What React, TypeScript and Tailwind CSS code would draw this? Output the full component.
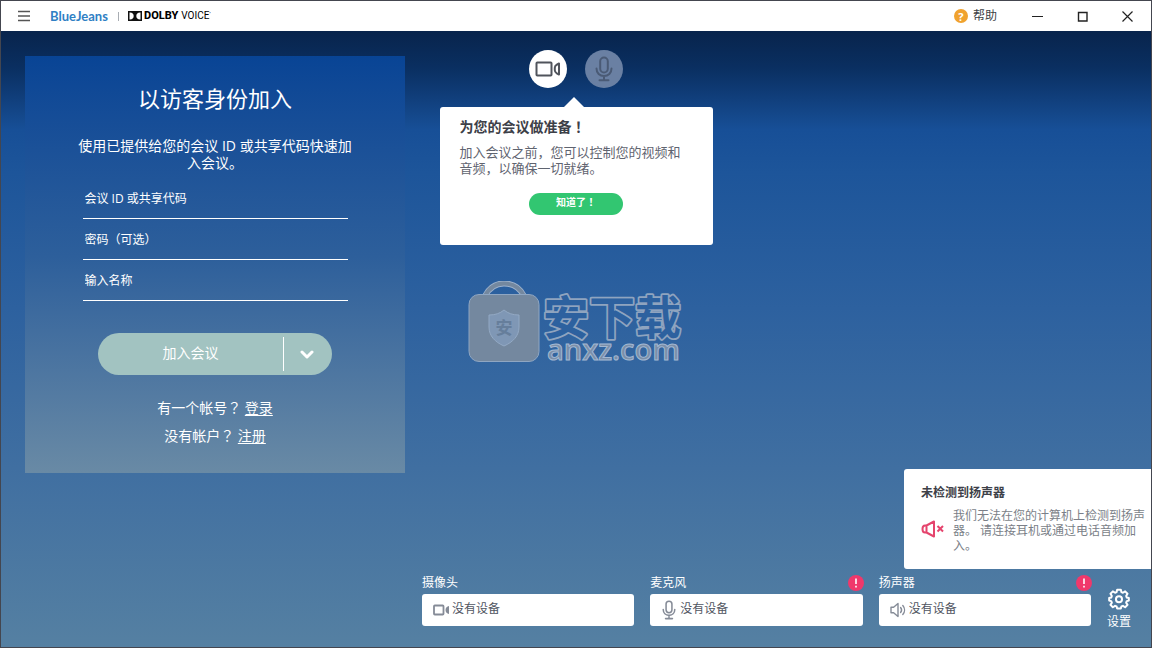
import type { ReactNode } from "react";

type IconProps = { className?: string };

function CameraIcon({ className }: IconProps) {
  return (
    <svg viewBox="0 0 26 16" className={className} fill="none" stroke="currentColor" strokeWidth="2" strokeLinejoin="round" aria-hidden="true">
      <rect x="1.5" y="1.5" width="15" height="13" rx="0.8" />
      <path d="M24 2.5v11l-2.2-1.2c-1.3-.8-2-1.800-2-3V6.700c0-1.200.7-2.200 2-3z" />
    </svg>
  );
}

function SmallCameraIcon({ className }: IconProps) {
  return (
    <svg viewBox="0 0 17 12" className={className} fill="none" stroke="currentColor" strokeWidth="1.800" strokeLinejoin="round" aria-hidden="true">
      <rect x="1" y="1.500" width="9.500" height="9" rx="0.800" />
      <path d="M16 2v8c-2-.5-3.500-1.800-3.500-4S14 2.500 16 2z" fill="currentColor" stroke="none" />
    </svg>
  );
}

function MicIcon({ className }: IconProps) {
  return (
    <svg viewBox="0 0 18 26" className={className} fill="none" stroke="currentColor" strokeWidth="2" strokeLinecap="round" aria-hidden="true">
      <rect x="5.200" y="1.500" width="7.600" height="15" rx="3.800" />
      <path d="M1.500 12.500c0 4.500 3.200 7.500 7.500 7.500s7.500-3 7.500-7.500M9 20v4M4.500 24.200h9" />
    </svg>
  );
}

function SpeakerIcon({ className }: IconProps) {
  return (
    <svg viewBox="0 0 16 16" className={className} fill="none" stroke="currentColor" strokeWidth="1.400" strokeLinejoin="round" strokeLinecap="round" aria-hidden="true">
      <path d="M1 5.200h2.600L8 1.500v13l-4.400-3.700H1z" />
      <path d="M10.600 5.500c1.200 1.500 1.200 3.500 0 5M12.800 3.500c2.300 2.600 2.300 6.400 0 9" />
    </svg>
  );
}

function MutedIcon({ className }: IconProps) {
  return (
    <svg viewBox="0 0 24 18" className={className} fill="none" stroke="currentColor" strokeWidth="2" strokeLinejoin="round" aria-hidden="true">
      <path d="M5.500 5.500H4C2.200 5.500 1.500 7 1.500 9s.7 3.500 2.500 3.500h1.500zM5.500 5.500 13 1.500v15l-7.500-4" />
      <path d="m16.500 6 5.500 5.500M22 6l-5.500 5.500" />
    </svg>
  );
}

function GearIcon({ className }: IconProps) {
  return (
    <svg viewBox="0 0 24 24" className={className} fill="none" stroke="currentColor" strokeWidth="2.200" strokeLinejoin="round" aria-hidden="true">
      <path d="M10 1.800h4l.6 2.700 1.700.7 2.400-1.500 2.600 2.600-1.500 2.400.7 1.700 2.200.6v2.600l-2.200.7-.7 1.700 1.500 2.400-2.600 2.600-2.400-1.500-1.700.7-.6 2.200h-4l-.6-2.200-1.700-.7L5.300 21l-2.600-2.600L4.200 16l-.7-1.700-2.200-.7V11l2.200-.6.7-1.700-1.500-2.400 2.600-2.600 2.400 1.500 1.700-.7z" />
      <circle cx="12" cy="12.200" r="3.300" />
    </svg>
  );
}

function Watermark() {
  return (
    <svg viewBox="0 0 216 96" className="pointer-events-none absolute top-[250px] left-1/2 h-[96px] w-[216px] -translate-x-[108px]" aria-hidden="true">
      <path d="M17 15C22 5 29 2.500 36 2.500S51 5 56 15" fill="none" stroke="#9cb1cc" strokeWidth="6" />
      <path d="M17 15C22 5 29 2.500 36 2.500S51 5 56 15" fill="none" stroke="#74889f" strokeWidth="4" />
      <rect x="1" y="13.500" width="70" height="67" rx="10" fill="#74889f" stroke="#8fa6c2" />
      <path d="M36 29c4 3.500 9 5 15 5v12c0 9-6 15-15 19-9-4-15-10-15-19V34c6 0 11-1.500 15-5z" fill="#7f97b5" stroke="#93a9c4" />
      <text x="36" y="53" textAnchor="middle" fontSize="17" fontWeight="700" fill="#667e9b" className="font-['Noto_Sans_CJK_SC',sans-serif]">安</text>
      <text
        x="75"
        y="53"
        fontSize="46"
        fontWeight="700"
        fill="#2d619f"
        stroke="#8fa4bf"
        strokeWidth="3.600"
        strokeLinejoin="round"
        paintOrder="stroke"
        className="font-['Noto_Sans_CJK_SC',sans-serif]"
      >
        安下载
      </text>
      <text x="79" y="79" fontSize="29" fontWeight="600" fill="#7b8fa9" stroke="#a3b8d2" strokeWidth="1" className="font-['Open_Sans',sans-serif]">anxz.com</text>
    </svg>
  );
}

function TitleBar() {
  return (
    <header className="flex h-[30px] items-center bg-white text-[#3c3f46]">
      <button type="button" aria-label="菜单" className="ml-[17px] flex h-6 w-3 items-center">
        <svg viewBox="0 0 12 12" className="size-3" stroke="#555" strokeWidth="1.300" aria-hidden="true">
          <path d="M0 1.500h12M0 6h12M0 10.500h12" />
        </svg>
      </button>
      <span className="ml-5 w-[57px] font-['Lato',sans-serif] text-[13px] leading-4 font-bold text-[#2f80c4]">BlueJeans</span>
      <span className="ml-[11px] h-[9px] w-px bg-[#a9adb3]" />
      <span className="ml-[9px] flex items-center text-black">
        <svg viewBox="0 0 14 10" className="mr-0.5 h-[10px] w-[14px]" aria-hidden="true">
          <rect width="14" height="10" fill="#111" />
          <path d="M1.500 1.500H2c2.300 0 3.700 1.500 3.700 3.500S4.300 8.500 2 8.500h-.5zM12.500 1.500H12C9.700 1.500 8.300 3 8.300 5s1.400 3.500 3.700 3.500h.5z" fill="#fff" />
        </svg>
        <span className="font-['Roboto',sans-serif] text-[11px] leading-4 font-extrabold">DOLBY</span>
        <span className="ml-[3px] font-['Roboto',sans-serif] text-[10px] leading-4">VOICE</span>
        <span className="mb-1 text-[6px] leading-none">’</span>
      </span>
      <button type="button" className="ml-auto flex items-center gap-[5px] text-[12px] leading-4">
        <span className="flex size-[14px] items-center justify-center rounded-full bg-[#f0a22e] font-['Open_Sans',sans-serif] text-[11px] leading-none font-bold text-white">?</span>
        帮助
      </button>
      <div className="mr-[18px] ml-[35px] flex items-center gap-[34px] text-[#222]">
        <button type="button" aria-label="最小化">
          <svg viewBox="0 0 11 11" className="size-[11px]" stroke="currentColor" aria-hidden="true"><path d="M0 5.500h11" /></svg>
        </button>
        <button type="button" aria-label="最大化">
          <svg viewBox="0 0 11 11" className="size-[11px]" fill="none" stroke="currentColor" strokeWidth="1.400" aria-hidden="true"><path d="M1.500 1.500h8.500v8.500h-8.500z" /></svg>
        </button>
        <button type="button" aria-label="关闭">
          <svg viewBox="0 0 11 11" className="size-[11px]" stroke="currentColor" strokeWidth="1.200" aria-hidden="true"><path d="m.5.5 10 10M10.500.5l-10 10" /></svg>
        </button>
      </div>
    </header>
  );
}

const fields = [
  { id: "meeting", label: "会议 ID 或共享代码", type: "text" },
  { id: "passcode", label: "密码（可选）", type: "password" },
  { id: "name", label: "输入名称", type: "text" },
];

function Mark({ children }: { children: ReactNode }) {
  return <span lang="zh-TW" className="font-['Noto_Sans_CJK_TC',sans-serif]">{children}</span>;
}

function JoinPanel() {
  return (
    <form className="flex w-[380px] flex-col items-center bg-linear-to-b from-[#084495] via-[#2d5f9b] via-48% to-[#698aa5] pt-[26px] pb-[29px] text-white">
      <h1 className="text-[22px] leading-8">以访客身份加入</h1>
      <p className="mt-[23px] w-[275px] text-center text-[14px] leading-[17px]">使用已提供给您的会议 ID 或共享代码快速加入会议。</p>
      <div className="mt-[7px] w-[265px]">
        {fields.map((f) => (
          <input
            key={f.id}
            id={f.id}
            type={f.type}
            aria-label={f.label}
            placeholder={f.label}
            className="block h-[41px] w-full border-b border-white bg-transparent px-0.5 text-[12px] leading-4 outline-none placeholder:text-white placeholder:opacity-100"
          />
        ))}
      </div>
      <div className="mt-8 flex h-[42px] w-[234px] items-center overflow-hidden rounded-full bg-[#a2c3c1]">
        <button type="button" className="h-full flex-1 pb-0.5 text-[14px] leading-5">加入会议</button>
        <span className="h-[34px] w-px bg-white" />
        <button type="button" aria-label="更多加入选项" className="flex h-full w-12 items-center justify-center pr-0.5">
          <svg viewBox="0 0 14 9" className="h-[9px] w-[14px]" fill="none" stroke="currentColor" strokeWidth="3" strokeLinecap="round" strokeLinejoin="round" aria-hidden="true">
            <path d="m2 2 5 5 5-5" />
          </svg>
        </button>
      </div>
      <p className="mt-[23px] h-[18px] text-[14px] leading-[18px]">有一个帐号<Mark>？</Mark> <a href="#login" className="underline underline-offset-2">登录</a></p>
      <p className="mt-[10px] h-[18px] text-[14px] leading-[18px]">没有帐户<Mark>？</Mark> <a href="#register" className="underline underline-offset-2">注册</a></p>
    </form>
  );
}

function PreparePopover() {
  return (
    <section className="flex flex-col items-center">
      <div className="flex gap-[18px]">
        <button type="button" aria-label="摄像头" className="flex size-[38px] items-center justify-center rounded-full bg-white text-[#50545c]">
          <CameraIcon className="h-4 w-[26px]" />
        </button>
        <button type="button" aria-label="麦克风" className="flex size-[38px] items-center justify-center rounded-full bg-[#6a80a3] text-[#4a5a75]">
          <MicIcon className="h-[26px] w-[18px]" />
        </button>
      </div>
      <svg viewBox="0 0 20 10" className="mt-[9px] mr-1 h-[10px] w-5" aria-hidden="true"><path d="M0 10 10 0l10 10z" fill="#fff" /></svg>
      <div className="flex w-full flex-col rounded-[3px] bg-white px-5 pt-[10px] pb-[30px]">
        <h2 className="h-[18px] text-[14px] leading-[18px] font-bold text-[#3d4048]">为您的会议做准备<Mark>！</Mark></h2>
        <p className="mt-[9px] text-[13px] leading-4 text-[#5f6470]">加入会议之前，您可以控制您的视频和音频，以确保一切就绪。</p>
        <button type="button" className="mt-[17px] flex h-[22px] w-[94px] items-center justify-center self-center rounded-full bg-[#32c671] pb-1 text-[10px] leading-4 font-bold text-white">知道了<Mark>！</Mark></button>
      </div>
    </section>
  );
}

const devices = [
  { id: "camera", label: "摄像头", alert: false, icon: <SmallCameraIcon className="h-3 w-[17px]" /> },
  { id: "mic", label: "麦克风", alert: true, icon: <MicIcon className="h-5 w-[14px]" /> },
  { id: "speaker", label: "扬声器", alert: true, icon: <SpeakerIcon className="size-4" /> },
];

function DeviceBar() {
  return (
    <section className="mt-auto flex gap-4 pr-5 pb-[21px] pl-[421px]">
      {devices.map((d) => (
        <div key={d.id} className="flex-1">
          <div className="flex h-[22px] items-center justify-between text-white">
            <label htmlFor={d.id} className="text-[12px] leading-4">{d.label}</label>
            {d.alert && (
              <svg viewBox="0 0 16 16" className="-mr-px size-4" role="img" aria-label="警告">
                <circle cx="8" cy="8" r="8" fill="#f0386b" />
                <path d="M8 3.500v5.500M8 10.800v1.700" stroke="#fff" strokeWidth="1.600" />
              </svg>
            )}
          </div>
          <div className="flex h-8 items-center gap-0.5 rounded-[3px] bg-white pl-[10px] text-[#858b97]">
            <span className="flex w-[18px] items-center justify-center">{d.icon}</span>
            <select id={d.id} className="h-full flex-1 appearance-none bg-transparent pb-0.5 text-[12px] text-[#50555f] outline-none">
              <option>没有设备</option>
            </select>
          </div>
        </div>
      ))}
      <button type="button" className="mt-4 -mb-1 flex w-6 flex-col items-center gap-1 text-[12px] leading-4 whitespace-nowrap text-white">
        <GearIcon className="size-[22px]" />
        设置
      </button>
    </section>
  );
}

function SpeakerToast() {
  return (
    <aside className="absolute right-0 bottom-[78px] w-[247px] rounded-l-[3px] bg-white pt-4 pb-4 pl-[17px]">
      <h2 className="text-[12px] leading-4 font-bold text-[#3d4048]">未检测到扬声器</h2>
      <div className="mt-[7px] flex gap-2">
        <MutedIcon className="mt-3 h-[18px] w-6 shrink-0 text-[#e5446d]" />
        <p className="w-[194px] text-[12px] leading-[15px] text-[#7b7f88]">我们无法在您的计算机上检测到扬声器。 请连接耳机或通过电话音频加入。</p>
      </div>
    </aside>
  );
}

export default function App() {
  return (
    <div className="flex min-h-screen flex-col border border-[#44464f] font-['Open_Sans','Noto_Sans_CJK_SC',sans-serif]" lang="zh-CN">
      <TitleBar />
      <main className="relative flex flex-1 flex-col bg-[linear-gradient(to_bottom,#08244c_0%,#0a2f61_6%,#174f97_16%,#1d559a_23%,#2d619f_45%,#406fa1_71%,#5580a2_100%)]">
        <div className="grid grid-cols-[1fr_273px_1fr]">
          <div className="pt-[25px] pl-6">
            <JoinPanel />
          </div>
          <div className="pt-[19px]">
            <PreparePopover />
          </div>
        </div>
        <Watermark />
        <DeviceBar />
        <SpeakerToast />
      </main>
    </div>
  );
}
